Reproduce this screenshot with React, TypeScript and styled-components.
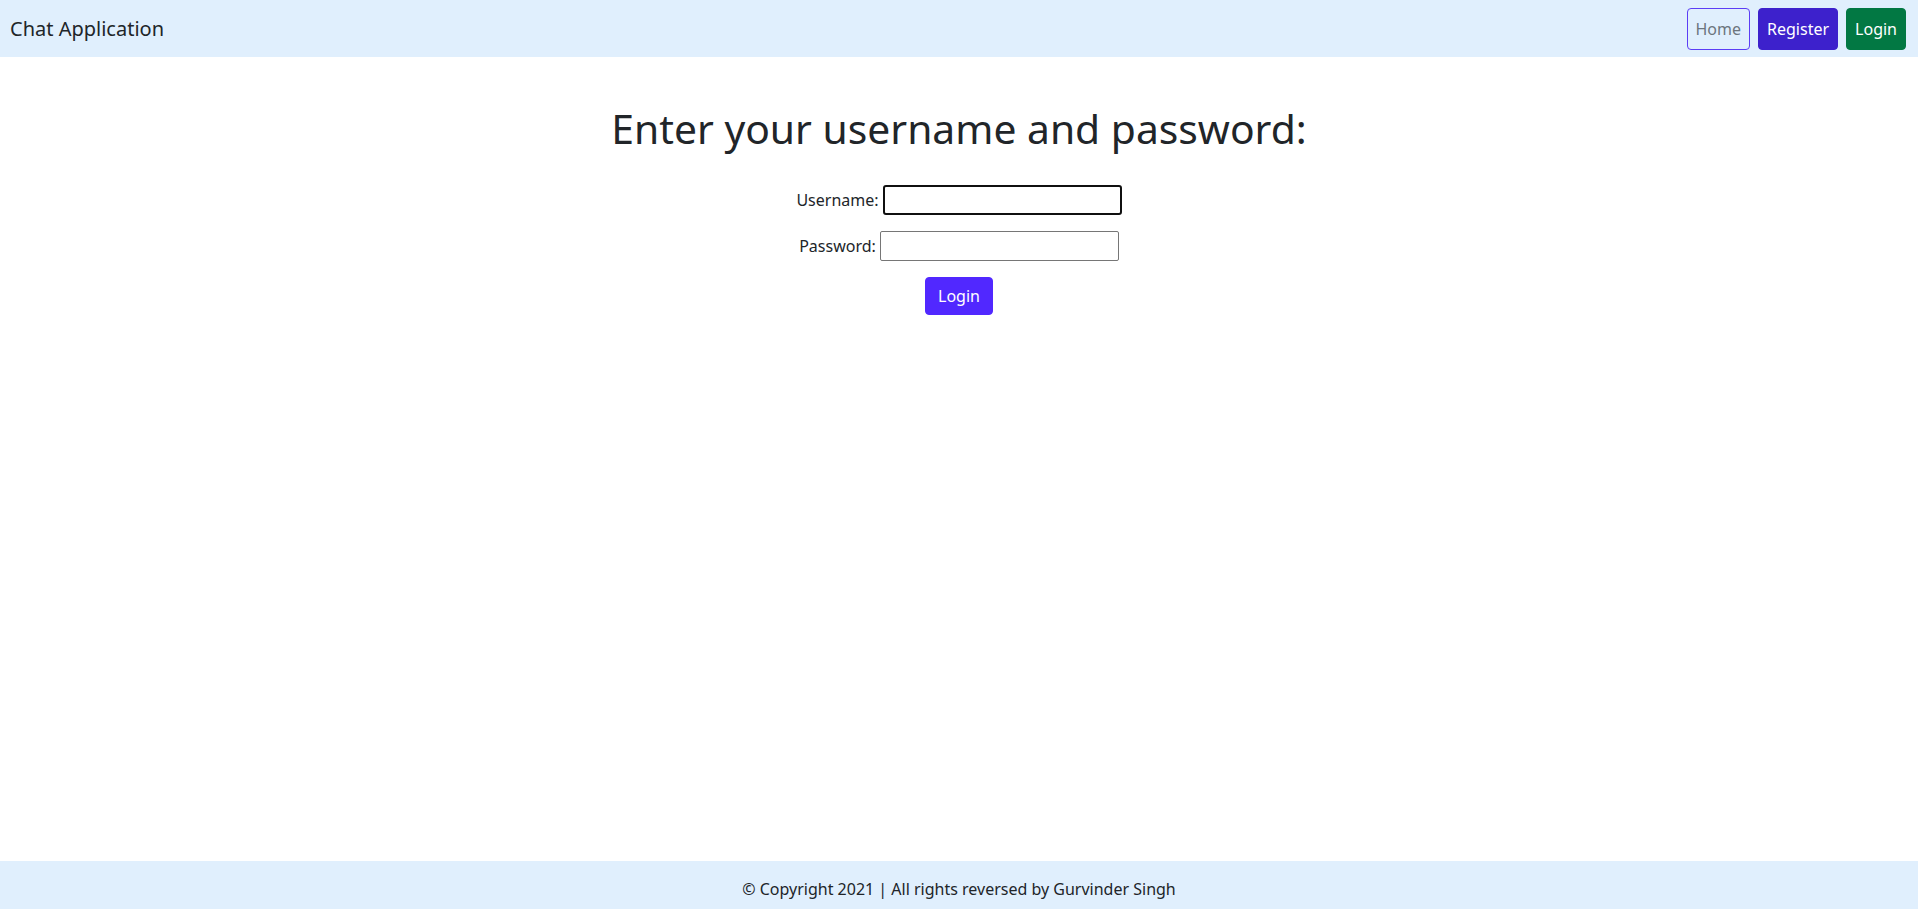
import styled, { createGlobalStyle } from "styled-components";

const GlobalStyle = createGlobalStyle`
  * { box-sizing: border-box; }
  body {
    margin: 0;
    font-family: "Noto Sans", "Liberation Sans", sans-serif;
    font-size: 16px;
    line-height: 1.5;
    color: #212529;
    background: #fff;
  }
`;

const Page = styled.div`
  min-height: 100vh;
  display: flex;
  flex-direction: column;
`;

const Navbar = styled.nav`
  height: 57px;
  background-color: #e0effd;
  display: flex;
  align-items: center;
  justify-content: space-between;
  padding: 0 12px 0 10px;
`;

const Brand = styled.span`
  font-size: 20px;
  color: #212529;
`;

const NavButtons = styled.div`
  display: flex;
  gap: 8px;
`;

const NavButton = styled.button<{ $variant: "outline" | "purple" | "green" }>`
  font-family: inherit;
  font-size: 16px;
  line-height: 24px;
  padding: 8px 8px;
  border-radius: 4px;
  cursor: pointer;
  border: 1px solid
    ${(p) => (p.$variant === "outline" ? "#5b3df5" : p.$variant === "purple" ? "#3d21cc" : "#027843")};
  background-color: ${(p) =>
    p.$variant === "outline" ? "transparent" : p.$variant === "purple" ? "#3d21cc" : "#027843"};
  color: ${(p) => (p.$variant === "outline" ? "#6c757d" : "#fff")};
`;

const Main = styled.main`
  flex: 1;
  text-align: center;
  padding-top: 47px;
`;

const Title = styled.h1`
  font-size: 40.8px;
  font-weight: 400;
  line-height: 1.2;
  margin: 0 0 32px;
  color: #212529;
`;

const Form = styled.form`
  display: flex;
  flex-direction: column;
  align-items: center;
`;

const Row = styled.div`
  display: flex;
  align-items: center;
  gap: 4px;
  height: 30px;
  margin-bottom: 16px;
`;

const Label = styled.label`
  font-size: 16px;
`;

const Input = styled.input<{ $focused?: boolean }>`
  width: 239px;
  height: 30px;
  font-family: inherit;
  font-size: 16px;
  padding: 1px 2px;
  outline: none;
  border: ${(p) => (p.$focused ? "2px solid #101010" : "1px solid #767676")};
  border-radius: ${(p) => (p.$focused ? "3px" : "2px")};
`;

const SubmitButton = styled.button`
  font-family: inherit;
  font-size: 16px;
  line-height: 24px;
  padding: 6px 12px;
  border: 1px solid #5128ff;
  border-radius: 4px;
  background-color: #5128ff;
  color: #fff;
  cursor: pointer;
`;

const Footer = styled.footer`
  height: 48px;
  background-color: #e0effd;
  text-align: center;
  padding-top: 16px;
  font-size: 16px;
  color: #212529;
`;

export default function App() {
  return (
    <Page>
      <GlobalStyle />
      <Navbar>
        <Brand>Chat Application</Brand>
        <NavButtons>
          <NavButton $variant="outline">Home</NavButton>
          <NavButton $variant="purple">Register</NavButton>
          <NavButton $variant="green">Login</NavButton>
        </NavButtons>
      </Navbar>
      <Main>
        <Title>Enter your username and password:</Title>
        <Form onSubmit={(e) => e.preventDefault()}>
          <Row>
            <Label htmlFor="username">Username:</Label>
            <Input id="username" type="text" $focused />
          </Row>
          <Row>
            <Label htmlFor="password">Password:</Label>
            <Input id="password" type="password" />
          </Row>
          <SubmitButton type="submit">Login</SubmitButton>
        </Form>
      </Main>
      <Footer>© Copyright 2021 | All rights reversed by Gurvinder Singh</Footer>
    </Page>
  );
}
